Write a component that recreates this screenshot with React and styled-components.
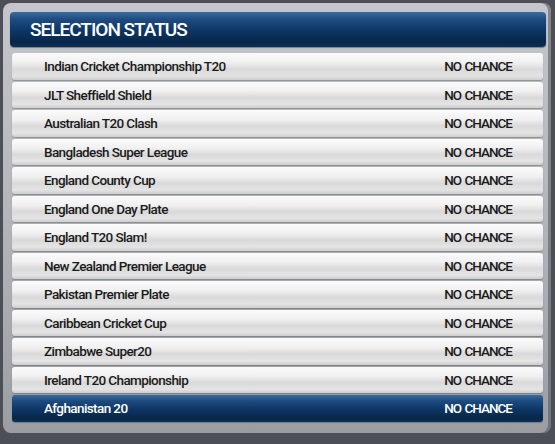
import styled, { createGlobalStyle, css } from 'styled-components';

const leagues = [
  'Indian Cricket Championship T20',
  'JLT Sheffield Shield',
  'Australian T20 Clash',
  'Bangladesh Super League',
  'England County Cup',
  'England One Day Plate',
  'England T20 Slam!',
  'New Zealand Premier League',
  'Pakistan Premier Plate',
  'Caribbean Cricket Cup',
  'Zimbabwe Super20',
  'Ireland T20 Championship',
  'Afghanistan 20',
];

const GlobalStyle = createGlobalStyle`
  html, body {
    margin: 0;
    padding: 0;
    background: #4c4f56;
  }
  body {
    font-family: Roboto, 'Liberation Sans', sans-serif;
  }
`;

const Panel = styled.div`
  margin: 3px 4px 0 3px;
  height: 430px;
  box-sizing: border-box;
  padding: 9px 3px 0 7px;
  border-radius: 8px;
  background: linear-gradient(180deg, #c3c6ca 0%, #b2b5ba 50%, #9a9da2 100%);
  box-shadow: inset -3px 0 0 rgba(80, 83, 90, 0.55);
`;

const navy = css`
  background: linear-gradient(
    180deg,
    #3a6a9e 0%,
    #1d4b80 22%,
    #0d3564 55%,
    #082748 85%,
    #0b2f58 100%
  );
  color: #ffffff;
`;

const Header = styled.div`
  ${navy};
  height: 35px;
  margin-right: 2px;
  border-radius: 4px;
  display: flex;
  align-items: center;
  padding-left: 20px;
  font-size: 19px;
  font-weight: 500;
  letter-spacing: -1px;
  box-shadow: 0 1px 1px rgba(0, 0, 0, 0.35);
`;

const List = styled.div`
  display: flex;
  flex-direction: column;
  gap: 2px;
  margin: 6px 5px 0 2px;
`;

const Row = styled.div`
  height: 26.5px;
  box-sizing: border-box;
  border-radius: 3px;
  display: flex;
  align-items: center;
  justify-content: space-between;
  padding: 0 31px 0 32px;
  font-size: 13.5px;
  font-weight: 500;
  letter-spacing: -0.6px;
  color: #1a1a1a;
  background: linear-gradient(
    180deg,
    #fbfbfb 0%,
    #f0f0f0 35%,
    #d9d9d9 60%,
    #e4e4e4 85%,
    #cdcdcd 100%
  );
  box-shadow: 0 1px 1px rgba(60, 60, 60, 0.35);
  ${(p) => p.$selected && navy};
`;

const Status = styled.span`
  text-transform: uppercase;
  letter-spacing: -1px;
  word-spacing: 1px;
`;

export default function App() {
  return (
    <>
      <GlobalStyle />
      <Panel>
        <Header>SELECTION STATUS</Header>
        <List>
          {leagues.map((name, i) => (
            <Row key={name} $selected={i === leagues.length - 1}>
              <span>{name}</span>
              <Status>No Chance</Status>
            </Row>
          ))}
        </List>
      </Panel>
    </>
  );
}
